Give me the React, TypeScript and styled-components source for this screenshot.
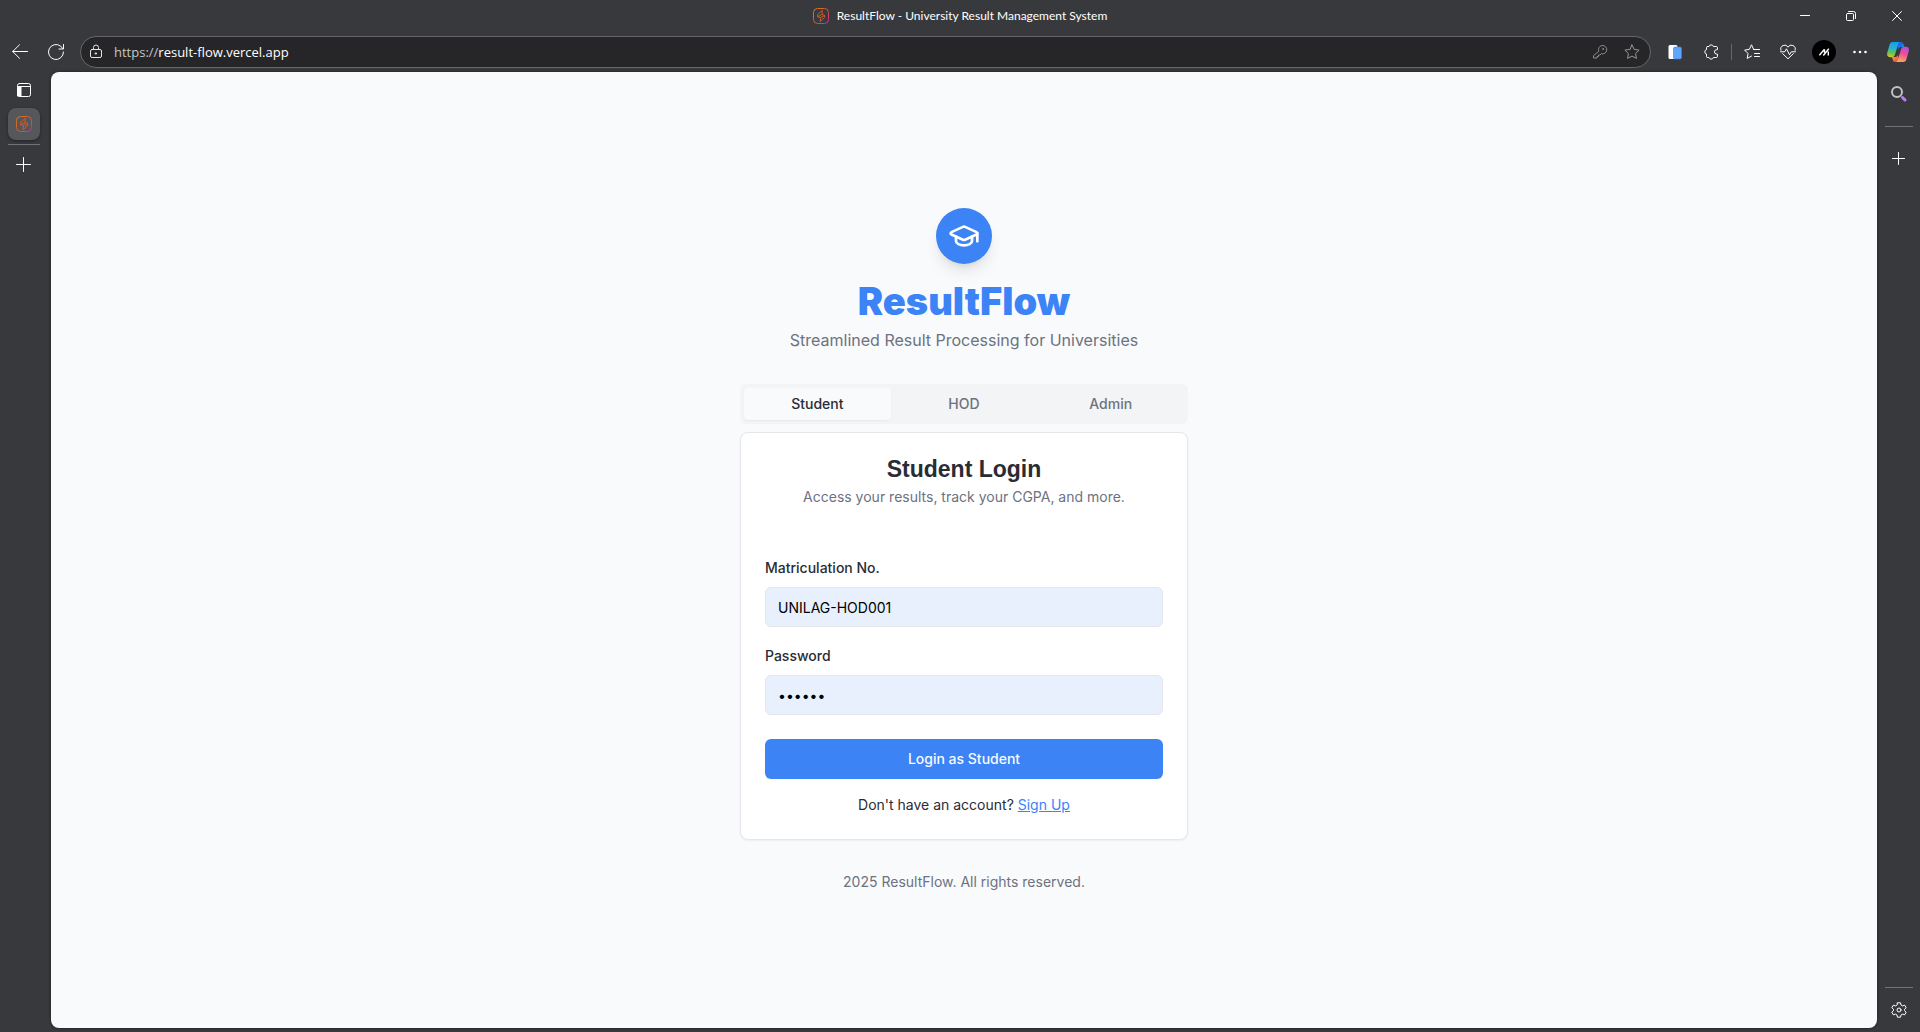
import React, { useState } from "react";
import styled, { createGlobalStyle } from "styled-components";
import { GraduationCap } from "lucide-react";

const color = {
  chrome: "#38393c",
  field: "#262628",
  fieldBorder: "#66676a",
  page: "#f9fafc",
  primary: "#3c83f6",
  text: "#2a2c35",
  muted: "#6c727f",
  border: "#e5e7eb",
};

const uiFont = '"Open Sans", "Noto Sans", sans-serif';

const GlobalStyle = createGlobalStyle`
  *, *::before, *::after { box-sizing: border-box; }
  body {
    margin: 0;
    background: ${color.chrome};
    font-family: Inter, sans-serif;
    color: ${color.text};
  }
  button, input { font: inherit; color: inherit; }
  h1, h2, p { margin: 0; }
  svg { display: block; flex: none; }
`;

/* ---------- Browser frame ---------- */

const Frame = styled.div`
  display: flex;
  flex-direction: column;
  min-height: 100vh;
  background: ${color.chrome};
  color: #fff;
`;

const TitleBar = styled.header`
  display: grid;
  grid-template-columns: 1fr auto 1fr;
  height: 32px;
`;

const WindowTitle = styled.div`
  grid-column: 2;
  display: flex;
  align-items: center;
  gap: 8px;
  font: 12px/16px Lato, ${uiFont};
`;

const WindowControls = styled.div`
  display: flex;
  justify-content: flex-end;
`;

const IconButton = styled.button<{ $width?: number }>`
  display: flex;
  align-items: center;
  justify-content: center;
  flex: none;
  width: ${(p) => p.$width ?? 32}px;
  height: 32px;
  padding: 0;
  border: 0;
  border-radius: 4px;
  background: none;
`;

const Toolbar = styled.nav`
  display: flex;
  align-items: center;
  gap: 4px;
  height: 40px;
  padding: 0 6px 0 4px;

  > :last-child { margin-left: 2px; }
`;

const AddressBar = styled.div`
  display: flex;
  align-items: center;
  flex: 1;
  height: 32px;
  margin: 0 4px;
  padding-right: 2px;
  border: 1px solid ${color.fieldBorder};
  border-radius: 16px;
  background: ${color.field};
  font: 13px/20px ${uiFont};
`;

const Scheme = styled.label`
  padding-left: 3px;
  color: #c4c4c6;
`;

const AddressInput = styled.input`
  flex: 1;
  min-width: 0;
  padding: 0;
  border: 0;
  outline: 0;
  background: none;
`;

const ToolbarRule = styled.span`
  width: 1px;
  height: 16px;
  background: #66676a;
`;

const Workspace = styled.div`
  display: flex;
  flex: 1;
  padding-bottom: 4px;
`;

const Rail = styled.aside`
  display: flex;
  flex-direction: column;
  align-items: center;
`;

const TabRail = styled(Rail)`
  gap: 2px;
  width: 51px;
  padding: 2px 3px 2px 0;
`;

const AppRail = styled(Rail)`
  gap: 16px;
  width: 43px;
  padding: 6px 0 2px;
`;

const RailFooter = styled(Rail).attrs({ as: "div" })`
  gap: 6px;
  margin-top: auto;
`;

const RailRule = styled.span<{ $width: number; $margin?: number }>`
  width: ${(p) => p.$width}px;
  height: 1px;
  margin: ${(p) => p.$margin ?? 0}px 0;
  background: #727376;
`;

const TabButton = styled(IconButton)`
  border-radius: 8px;
  background: #56575b;
  box-shadow: 0 1px 3px rgba(0, 0, 0, 0.4);
`;

/* ---------- Login page ---------- */

const Page = styled.main`
  display: flex;
  flex-direction: column;
  align-items: center;
  justify-content: center;
  flex: 1;
  padding: 16px;
  border-radius: 8px;
  background: ${color.page};
  box-shadow: 0 0 3px rgba(0, 0, 0, 0.5);
  color: ${color.text};
`;

const Brand = styled.div`
  display: flex;
  flex-direction: column;
  align-items: center;
  margin-bottom: 32px;
`;

const BrandBadge = styled.span`
  display: grid;
  place-items: center;
  width: 56px;
  height: 56px;
  margin-bottom: 16px;
  border-radius: 50%;
  background: ${color.primary};
  color: #fff;
  box-shadow: 0 10px 15px -3px rgba(0, 0, 0, 0.1), 0 4px 6px -4px rgba(0, 0, 0, 0.1);
`;

const BrandName = styled.h1`
  font-size: 38px;
  font-weight: 900;
  line-height: 42px;
  color: ${color.primary};
`;

const Tagline = styled.p`
  margin-top: 6px;
  font-size: 16px;
  line-height: 24px;
  color: ${color.muted};
`;

const Column = styled.section`
  width: 100%;
  max-width: 448px;
`;

const Tabs = styled.div`
  display: grid;
  grid-template-columns: repeat(3, 1fr);
  height: 40px;
  padding: 4px;
  border-radius: 6px;
  background: #f3f4f6;
`;

const Tab = styled.button<{ $active: boolean }>`
  padding: 0;
  border: 0;
  border-radius: 4px;
  font-size: 14px;
  font-weight: 500;
  line-height: 20px;
  background: ${(p) => (p.$active ? color.page : "transparent")};
  color: ${(p) => (p.$active ? color.text : color.muted)};
  box-shadow: ${(p) => (p.$active ? "0 1px 2px rgba(0, 0, 0, 0.05)" : "none")};
`;

const Card = styled.form`
  margin-top: 8px;
  padding: 24px;
  border: 1px solid ${color.border};
  border-radius: 8px;
  background: #fff;
  box-shadow: 0 1px 2px rgba(0, 0, 0, 0.05);
  font-size: 14px;
  line-height: 20px;
`;

const CardHeader = styled.div`
  margin-bottom: 48px;
  text-align: center;
`;

const CardTitle = styled.h2`
  font: 700 23px/24px "Liberation Sans", Arial, sans-serif;
`;

const CardHint = styled.p`
  margin-top: 6px;
  color: ${color.muted};
`;

const Field = styled.div`
  margin-bottom: 16px;
`;

const FieldLabel = styled.label`
  display: block;
  margin-bottom: 6px;
  font-weight: 500;
  line-height: 26px;
`;

const FieldInput = styled.input`
  display: block;
  width: 100%;
  height: 40px;
  padding: 8px 12px;
  border: 1px solid ${color.border};
  border-radius: 6px;
  background: #e8f0fe;
  color: #000;
`;

const SubmitButton = styled.button`
  width: 100%;
  height: 40px;
  margin-top: 8px;
  padding: 0;
  border: 0;
  border-radius: 6px;
  background: ${color.primary};
  font-weight: 500;
  color: #f9fafc;
`;

const SignUpLine = styled.p`
  margin-top: 16px;
  text-align: center;
`;

const SignUpLink = styled.a`
  color: ${color.primary};
  text-decoration: underline;
`;

const Copyright = styled.footer`
  margin-top: 32px;
  font-size: 14px;
  line-height: 20px;
  color: ${color.muted};
`;

/* ---------- Icons ---------- */

type StrokeProps = { size?: number; tint?: string; width?: number; children: React.ReactNode };

const Stroke = ({ size = 16, tint = "#fff", width = 1, children }: StrokeProps) => (
  <svg
    width={size}
    height={size}
    viewBox={`0 0 ${size} ${size}`}
    fill="none"
    stroke={tint}
    strokeWidth={width}
    strokeLinecap="round"
    strokeLinejoin="round"
    aria-hidden="true"
  >
    {children}
  </svg>
);

const Favicon = ({ id }: { id: string }) => (
  <svg width="16" height="16" viewBox="0 0 16 16" fill="none" aria-hidden="true">
    <defs>
      <linearGradient id={id} x1="0" y1="0" x2="16" y2="16" gradientUnits="userSpaceOnUse">
        <stop offset="0" stopColor="#d87a12" />
        <stop offset="0.55" stopColor="#d4573a" />
        <stop offset="1" stopColor="#b32fae" />
      </linearGradient>
    </defs>
    <rect x="0.5" y="0.5" width="15" height="15" rx="4" stroke={`url(#${id})`} />
    <path
      d="M9.300 2.300 4.600 6.500v2.300l3 .7-.6 4.200 4.600-4.200V7.300l-2.700-.8zM4.600 8.600l4.300-2.100M7.600 9.500l4-2"
      stroke="#dc5a2b"
      strokeWidth="0.9"
      strokeLinejoin="round"
    />
  </svg>
);

const PlusIcon = ({ small = false }: { small?: boolean }) => (
  <Stroke>
    <path d={small ? "M7.500 1.500v12M1.500 7.500h12" : "M7.500.5v14M.5 7.500h14"} />
  </Stroke>
);

const CopilotIcon = () => (
  <svg width="24" height="24" viewBox="0 0 24 24" aria-hidden="true">
    <defs>
      <linearGradient id="copilotLeft" x1="6" y1="2" x2="4" y2="18" gradientUnits="userSpaceOnUse">
        <stop offset="0" stopColor="#1a9cf0" />
        <stop offset="0.4" stopColor="#27b3c4" />
        <stop offset="0.7" stopColor="#74c04a" />
        <stop offset="1" stopColor="#f2c811" />
      </linearGradient>
      <linearGradient id="copilotRight" x1="20" y1="6" x2="15" y2="22" gradientUnits="userSpaceOnUse">
        <stop offset="0" stopColor="#a650ee" />
        <stop offset="0.5" stopColor="#ee4f96" />
        <stop offset="1" stopColor="#ffa75c" />
      </linearGradient>
      <linearGradient id="copilotTop" x1="12" y1="2" x2="17" y2="8" gradientUnits="userSpaceOnUse">
        <stop offset="0" stopColor="#1b58d8" />
        <stop offset="1" stopColor="#1e86e8" />
      </linearGradient>
      <linearGradient id="copilotBottom" x1="7" y1="16" x2="12" y2="22" gradientUnits="userSpaceOnUse">
        <stop offset="0" stopColor="#f5a02c" />
        <stop offset="1" stopColor="#ef4438" />
      </linearGradient>
    </defs>
    <path d="M11 2h4c1.500 0 2.200 1 2.600 2.300L18.400 7H15c-1.500 0-2.300 1-2.700 2.300z" fill="url(#copilotTop)" />
    <path d="M13 22H9.500c-1.600 0-2.300-1-2.700-2.300L6 17h3.300c1.500 0 2.300-1 2.700-2.300z" fill="url(#copilotBottom)" />
    <path d="M6.800 2H14c-1.300.5-1.700 1.600-2.200 3.400L9 14.600C8.500 16.300 7.600 17.200 6 17.200H4C1.400 17.200.6 15.200 1.300 12.500L3.400 5.200C4 3.100 5 2 6.800 2z" fill="url(#copilotLeft)" />
    <path d="M17.200 22H10c1.300-.5 1.700-1.600 2.200-3.400L15 9.400c.5-1.700 1.400-2.600 3-2.600h2c2.600 0 3.400 2 2.700 4.700l-2.100 7.300C20 20.900 19 22 17.200 22z" fill="url(#copilotRight)" />
  </svg>
);

const starPath = "M8 .9l2.200 4.500 4.900.7-3.500 3.400.8 4.900L8 12.100l-4.400 2.300.8-4.900L.9 6.100l4.900-.7z";

/* ---------- App ---------- */

const roles = ["Student", "HOD", "Admin"];

export default function App() {
  const [role, setRole] = useState("Student");
  const [matricNo, setMatricNo] = useState("UNILAG-HOD001");
  const [password, setPassword] = useState("secret");
  const [address, setAddress] = useState("result-flow.vercel.app");

  return (
    <>
      <GlobalStyle />
      <Frame>
        <TitleBar>
          <WindowTitle>
            <Favicon id="faviconTitle" />
            ResultFlow - University Result Management System
          </WindowTitle>
          <WindowControls>
            <IconButton $width={46} aria-label="Minimize">
              <Stroke size={10}><path d="M.5 4.500h9" /></Stroke>
            </IconButton>
            <IconButton $width={46} aria-label="Restore">
              <Stroke size={10}>
                <rect x=".5" y="2.500" width="7" height="7" rx="1" />
                <path d="M2.500.5h5a2 2 0 0 1 2 2v5" />
              </Stroke>
            </IconButton>
            <IconButton $width={46} aria-label="Close">
              <Stroke size={10}><path d="M.5.5l9 9M9.500.5l-9 9" /></Stroke>
            </IconButton>
          </WindowControls>
        </TitleBar>

        <Toolbar>
          <IconButton aria-label="Back">
            <Stroke><path d="M15.500 7.500H.7M7.500.8L.7 7.500l6.800 6.800" /></Stroke>
          </IconButton>
          <IconButton aria-label="Refresh">
            <Stroke><path d="M15.500 8A7.500 7.500 0 1 1 12.600 2.100L14.700 4.500M15.500.5v4.500H11" /></Stroke>
          </IconButton>
          <AddressBar>
            <IconButton $width={30} aria-label="View site information">
              <Stroke tint="#e4e4e6">
                <rect x="2.500" y="5.500" width="11" height="8" rx="1.500" />
                <path d="M5.500 5.500V3.500a2.500 2.500 0 0 1 5 0v2" />
                <rect x="7.500" y="9" width="1" height="1" />
              </Stroke>
            </IconButton>
            <Scheme htmlFor="address">https://</Scheme>
            <AddressInput id="address" value={address} onChange={(e) => setAddress(e.target.value)} />
            <IconButton aria-label="Saved passwords">
              <Stroke tint="#8c8c8f">
                <path d="M6.600 7.100a4.200 4.200 0 1 1 2.700 2.600L8 11H6.500v1.500H5V14H1.500v-2z" />
                <circle cx="11" cy="5" r=".5" />
              </Stroke>
            </IconButton>
            <IconButton aria-label="Add to favorites">
              <Stroke tint="#98989b"><path d={starPath} /></Stroke>
            </IconButton>
          </AddressBar>
          <IconButton aria-label="Documents">
            <svg width="16" height="16" viewBox="0 0 16 16" aria-hidden="true">
              <rect x="1.500" y="1" width="9" height="14" rx="1.500" fill="#fff" />
              <rect x="6.500" y="3" width="8" height="12" rx="1.500" fill="#61a4fb" stroke="#3f7edb" strokeWidth=".6" />
            </svg>
          </IconButton>
          <IconButton aria-label="Extensions">
            <Stroke>
              <path d="M4.500 2.500H6a2.300 2.300 0 0 1 4.400 0h3a1 1 0 0 1 1 1v2.200h-.8a2 2 0 0 0 0 4.300h.8v2.500a1 1 0 0 1-1 1h-3a2.300 2.300 0 0 1-4.400 0H4.500a1 1 0 0 1-1-1V10a2.200 2.200 0 0 1 0-4.300V3.500a1 1 0 0 1 1-1z" />
            </Stroke>
          </IconButton>
          <ToolbarRule />
          <IconButton aria-label="Favorites">
            <Stroke>
              <path d="M9.700 5.500 7.500.8 5.300 5.400.6 6.100l3.400 3.400-.8 4.900 4.300-2.300M9.700 5.500h5.800M10.500 9.500h5M10.500 12.500h5" />
            </Stroke>
          </IconButton>
          <IconButton aria-label="Browser essentials">
            <Stroke>
              <path d="M.9 6.200A3.900 3.900 0 0 1 8 3.100a3.900 3.900 0 0 1 7.100 3.100M2.700 9.700 8 14.800l5.300-5.100" />
              <path d="M.5 7.800h4.200L6.500 4.800l3 6L11.300 7.800h4.200" />
            </Stroke>
          </IconButton>
          <IconButton aria-label="Profile">
            <svg width="24" height="24" viewBox="0 0 24 24" aria-hidden="true">
              <circle cx="12" cy="12" r="12" fill="#000" />
              <path
                d="M7.300 15.300 12.500 9.300M11.300 15.500 16.800 8.800M16.300 11.500v4M12.500 9.300v3.500"
                fill="none"
                stroke="#fff"
                strokeWidth="1.400"
              />
            </svg>
          </IconButton>
          <IconButton aria-label="Settings and more">
            <svg width="16" height="16" viewBox="0 0 16 16" fill="#fff" aria-hidden="true">
              <circle cx="2.500" cy="8" r="1.300" />
              <circle cx="8" cy="8" r="1.300" />
              <circle cx="13.500" cy="8" r="1.300" />
            </svg>
          </IconButton>
          <IconButton aria-label="Copilot"><CopilotIcon /></IconButton>
        </Toolbar>

        <Workspace>
          <TabRail>
            <IconButton aria-label="Tab actions">
              <Stroke>
                <rect x="1.500" y="1.500" width="13" height="13" rx="2" />
                <path d="M1.500 4.500h13" />
                <path d="M2 5h3v9H2z" fill="#fff" />
              </Stroke>
            </IconButton>
            <TabButton aria-label="ResultFlow tab"><Favicon id="faviconTab" /></TabButton>
            <RailRule $width={32} $margin={2} />
            <IconButton aria-label="New tab"><PlusIcon /></IconButton>
          </TabRail>

          <Page>
            <Brand>
              <BrandBadge><GraduationCap size={32} strokeWidth={2} /></BrandBadge>
              <BrandName>ResultFlow</BrandName>
              <Tagline>Streamlined Result Processing for Universities</Tagline>
            </Brand>

            <Column>
              <Tabs role="tablist">
                {roles.map((name) => (
                  <Tab
                    key={name}
                    type="button"
                    role="tab"
                    aria-selected={role === name}
                    $active={role === name}
                    onClick={() => setRole(name)}
                  >
                    {name}
                  </Tab>
                ))}
              </Tabs>

              <Card onSubmit={(e) => e.preventDefault()}>
                <CardHeader>
                  <CardTitle>{role} Login</CardTitle>
                  <CardHint>Access your results, track your CGPA, and more.</CardHint>
                </CardHeader>
                <Field>
                  <FieldLabel htmlFor="matric">Matriculation No.</FieldLabel>
                  <FieldInput id="matric" value={matricNo} onChange={(e) => setMatricNo(e.target.value)} />
                </Field>
                <Field>
                  <FieldLabel htmlFor="password">Password</FieldLabel>
                  <FieldInput
                    id="password"
                    type="password"
                    value={password}
                    onChange={(e) => setPassword(e.target.value)}
                  />
                </Field>
                <SubmitButton type="submit">Login as {role}</SubmitButton>
                <SignUpLine>
                  Don't have an account? <SignUpLink href="#signup">Sign Up</SignUpLink>
                </SignUpLine>
              </Card>
            </Column>

            <Copyright>2025 ResultFlow. All rights reserved.</Copyright>
          </Page>

          <AppRail>
            <IconButton aria-label="Search">
              <svg width="18" height="18" viewBox="0 0 18 18" fill="none" aria-hidden="true">
                <circle cx="7" cy="7" r="5" stroke="#c2c2c4" strokeWidth="2" />
                <path d="M12.500 12.500l2.500 2.500" stroke="#b583f0" strokeWidth="3" strokeLinecap="round" />
              </svg>
            </IconButton>
            <RailRule $width={28} />
            <IconButton aria-label="Customize sidebar"><PlusIcon small /></IconButton>
            <RailFooter>
              <RailRule $width={28} />
              <IconButton aria-label="Settings">
                <Stroke>
                  <path d="M6.500.8h3l.5 2.200 1.500.9 2.200-.7 1.500 2.600L13.500 7.300v1.400l1.700 1.500-1.500 2.600-2.200-.7-1.500.9-.5 2.200h-3L6 13l-1.500-.9-2.200.7L.8 10.200l1.700-1.500V7.300L.8 5.800l1.500-2.600 2.200.7L6 3z" />
                  <circle cx="8" cy="8" r="2" />
                </Stroke>
              </IconButton>
            </RailFooter>
          </AppRail>
        </Workspace>
      </Frame>
    </>
  );
}
